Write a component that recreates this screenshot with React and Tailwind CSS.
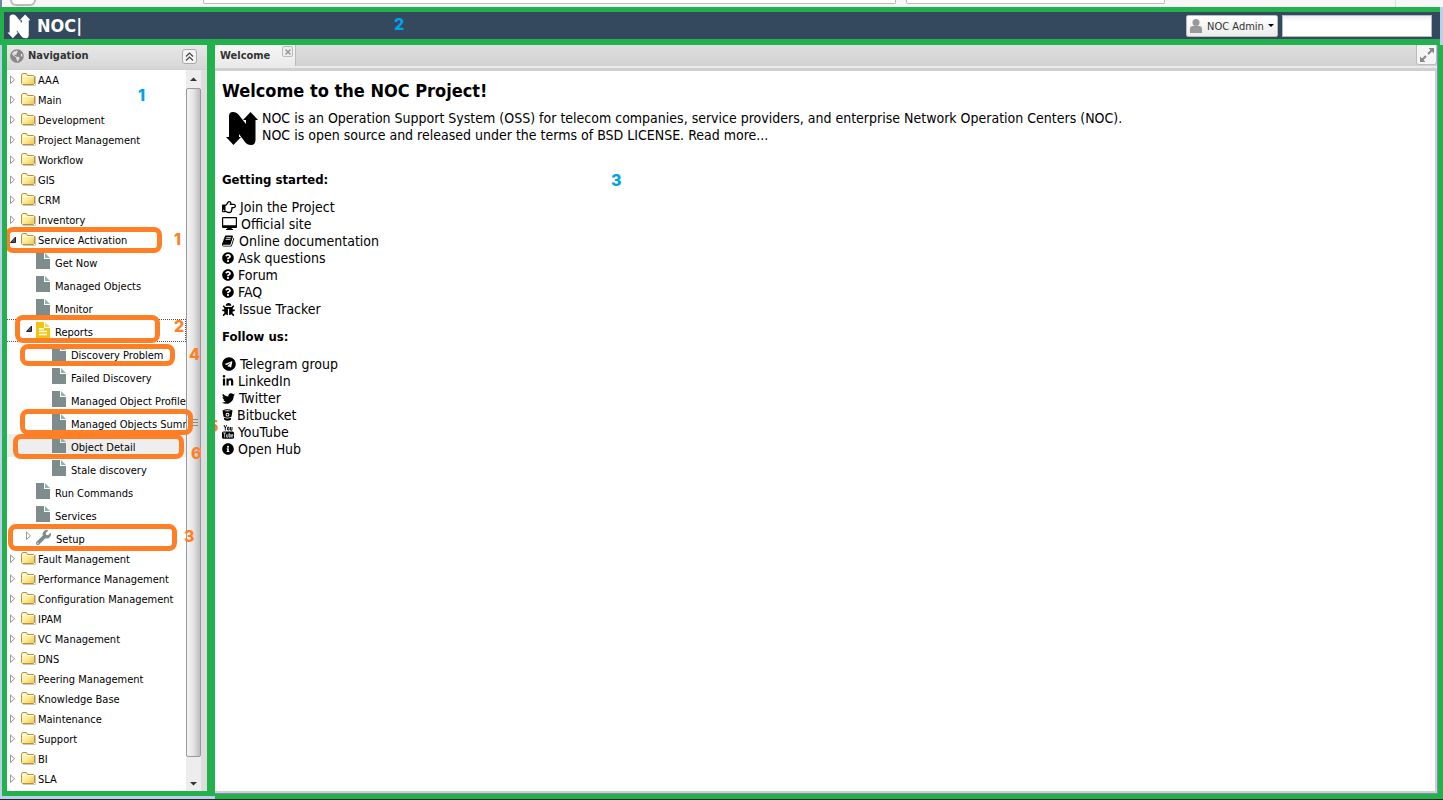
import React from "react";
import {
  FaRegHandPointRight,
  FaQuestionCircle,
  FaBug,
  FaTelegram,
  FaLinkedinIn,
  FaTwitter,
  FaInfoCircle,
  FaWrench,
  FaGlobeAmericas,
} from "react-icons/fa";

function Logo({ className }) {
  return (
    <svg viewBox="0 0 32 36" className={className} fill="currentColor" aria-hidden="true">
      <path d="M3 6Q3 2 7 2Q10 2 12 4L20 14V10H17L24.500 2L32 10H29.500V30Q29.500 35 25 35Q21 35 19 32L13 24V27H15L7.500 35L0 27H3Z" />
    </svg>
  );
}

function Folder() {
  return (
    <svg viewBox="0 0 16 16" className="size-4 shrink-0" aria-hidden="true">
      <defs>
        <linearGradient id="folder" x1="0" y1="0" x2="1" y2="1">
          <stop offset="0" stopColor="#fffbd6" />
          <stop offset="0.500" stopColor="#fdec98" />
          <stop offset="1" stopColor="#f3c24a" />
        </linearGradient>
      </defs>
      <path d="M3 13.500H15.500V4" fill="none" stroke="#c9c9c9" />
      <path d="M1.500 11.500V3L2.500 1.500H6.500L7.500 3.500H13.500L14.500 4.500V11.500L13.500 12.500H2.500Z" fill="url(#folder)" stroke="#b8913b" />
      <path d="M2.500 4.500H13.500" stroke="#fffbe0" />
    </svg>
  );
}

function FileIcon({ report }) {
  return (
    <svg viewBox="0 0 14 16" className="mb-px h-4 w-[14px] shrink-0" aria-hidden="true">
      <path d="M0 0H8V6H14V16H0Z" fill={report ? "#f1c40f" : "#7f8c8d"} />
      <path d="M9 0L14 5H9Z" fill={report ? "#f6d95c" : "#8fb3ad"} />
      {report && <path d="M3 7H8M3 9.500H11M3 12.500H11" stroke="#fff" strokeWidth="1.500" />}
    </svg>
  );
}

function Arrow({ open }) {
  return (
    <svg viewBox="0 0 8 10" className="h-[10px] w-2 shrink-0" aria-hidden="true">
      {open ? (
        <path d="M1.500 7.500H6.500V2Z" fill="#555" stroke="#222" />
      ) : (
        <path d="M1.500 1V8.500L5.500 4.750Z" fill="#fff" stroke="#999" />
      )}
    </svg>
  );
}

function Desktop({ className }) {
  return (
    <svg viewBox="0 0 15 14" className={className} fill="currentColor" aria-hidden="true">
      <path fillRule="evenodd" d="M1 0H14Q15 0 15 1V10Q15 11 14 11H9.500L10 12H11V13H4V12H5L5.500 11H1Q0 11 0 10V1Q0 0 1 0ZM1.200 1.200V8.200H13.800V1.200Z" />
    </svg>
  );
}

function Book({ className }) {
  return (
    <svg viewBox="0 0 1792 1792" className={className} fill="currentColor" aria-hidden="true">
      <path d="M1639 478q40 57 18 129l-275 906q-19 64-76.5 107.5t-122.5 43.5h-923q-77 0-148.5-53.5t-99.5-131.5q-24-67-2-127 0-4 3-27t4-37q1-8-3-21.5t-3-19.5q2-11 8-21t16.5-23.5 16.5-23.5q23-38 45-91.5t30-91.5q3-10 .5-30t-.5-28q3-11 17-28t17-23q21-36 42-92t25-90q1-9-2.5-32t.5-28q4-13 22-30.5t22-22.5q19-26 42.5-84.5t27.5-96.5q1-8-3-25.5t-2-26.5q2-8 9-18t18-23 17-21q8-12 16.5-30.5t15-35 16-36 19.5-32 26.5-23.5 36-11.5 47.5 5.5l-1 3q38-9 51-9h761q74 0 114 56t18 130l-274 906q-36 119-71.5 153.5t-128.5 34.5h-869q-27 0-38 15-11 16-1 43 24 70 144 70h923q29 0 56-15.5t35-41.5l300-987q7-22 5-57 38 15 59 43zm-1064 2q-4 13 2 22.5t20 9.5h608q13 0 25.5-9.5t16.5-22.5l21-64q4-13-2-22.5t-20-9.5h-608q-13 0-25.5 9.5t-16.5 22.5zm-83 256q-4 13 2 22.5t20 9.5h608q13 0 25.5-9.5t16.5-22.5l21-64q4-13-2-22.5t-20-9.5h-608q-13 0-25.5 9.5t-16.5 22.5z" />
    </svg>
  );
}

function Bucket({ className }) {
  return (
    <svg viewBox="0 0 12 13" className={className} fill="currentColor" aria-hidden="true">
      <path fillRule="evenodd" d="M0.500 1.500Q6 -0.800 11.500 1.500L10.300 8.500Q6 10.500 1.700 8.500ZM2.200 1.900Q6 3.100 9.800 1.900Q6 0.900 2.200 1.900ZM6 4A2.100 2.100 0 1 0 6 8.200A2.100 2.100 0 1 0 6 4Z" />
      <circle cx="6" cy="6.100" r="1" />
      <path d="M2 9.600Q6 11.300 10 9.600L9.600 11.700Q6 13.900 2.400 11.700Z" />
    </svg>
  );
}

function YouTube({ className }) {
  return (
    <svg viewBox="0 0 12 14" className={className} fill="currentColor" aria-hidden="true">
      <path d="M2 0L3.300 3V5.500M4.600 0L3.300 3M5.600 2.200H7V5H5.600ZM8.500 2V5.200H10V2" fill="none" stroke="currentColor" strokeWidth="0.900" />
      <rect x="0" y="6.500" width="12" height="7.300" rx="1.500" />
      <path d="M1.200 8H4M2.600 8V12.500M4.600 9.300V12.200H6V9.300M7.200 7.800V12.200H8.300V9.500H7.200M10.800 12.200H9.600V9.500H10.800V11H9.600" fill="none" stroke="#fff" strokeWidth="0.700" />
    </svg>
  );
}

const before = ["AAA", "Main", "Development", "Project Management", "Workflow", "GIS", "CRM", "Inventory"];
const after = [
  "Fault Management", "Performance Management", "Configuration Management", "IPAM", "VC Management", "DNS",
  "Peering Management", "Knowledge Base", "Maintenance", "Support", "BI", "SLA",
];
const reports = [
  "Discovery Problem", "Failed Discovery", "Managed Object Profile", "Managed Objects Summary", "Object Detail", "Stale discovery",
];

function FolderRow({ label, open }) {
  return (
    <button type="button" aria-expanded={!!open} className="flex h-5 w-full items-center pl-[2px] whitespace-nowrap">
      <Arrow open={open} />
      <span className="ml-[3px] flex"><Folder /></span>
      <span className="ml-[2px] pt-[2px]">{label}</span>
    </button>
  );
}

function Leaf({ label, deep, active }) {
  return (
    <a href="#" className={`flex h-[23px] items-center gap-[5px] whitespace-nowrap ${deep ? "pl-[45px]" : "pl-[29px]"} ${active ? "bg-[#eeeeee]" : ""}`}>
      <FileIcon />
      <span className="pt-[5px]">{label}</span>
    </a>
  );
}

const marks = [
  "left-[-2px] top-[157px] h-[26px] w-[157px]",
  "left-[8px] top-[245px] h-[28px] w-[145px]",
  "left-[13px] top-[274px] h-[22px] w-[155px]",
  "left-[13px] top-[339px] h-[26px] w-[173px]",
  "left-[6px] top-[364px] h-[25px] w-[171px]",
  "left-[1px] top-[454px] h-[27px] w-[169px]",
];
const numbers = [
  ["1", "left-[167px] top-[159px]"],
  ["2", "left-[167px] top-[246px]"],
  ["4", "left-[182px] top-[274px]"],
  ["6", "left-[184px] top-[373px]"],
  ["3", "left-[177px] top-[456px]"],
];
const num = "absolute font-[Inter,sans-serif] text-[16px] leading-5 font-extrabold";

function Sidebar() {
  return (
    <nav aria-label="Navigation" className="flex w-[213px] shrink-0 flex-col border-r-8 border-b-[5px] border-l-[5px] border-[#22b14c] bg-[#dddddd] text-[11px]">
      <div className="flex h-[25px] shrink-0 items-center gap-1 border-b border-[#d0d0d0] bg-linear-to-b from-[#e8e8e8] to-[#d6d6d6] pr-[10px] pb-[2px] pl-[3px]">
        <FaGlobeAmericas className="size-[14px] text-[#888]" />
        <h2 className="grow pt-px font-bold text-[#333]">Navigation</h2>
        <button type="button" aria-label="Collapse navigation" className="flex size-[15px] items-center justify-center rounded-[3px] border border-[#aaa] bg-[#f4f4f4]">
          <svg viewBox="0 0 9 9" className="size-[9px]" fill="none" stroke="#444" strokeWidth="1.200" aria-hidden="true">
            <path d="M1 4.500L4.500 1L8 4.500M1 8.500L4.500 5L8 8.500" />
          </svg>
        </button>
      </div>
      <div className="relative flex grow overflow-hidden pr-[6px]">
        <div className="min-w-0 grow overflow-hidden bg-white">
          {before.map((l) => <FolderRow key={l} label={l} />)}
          <FolderRow label="Service Activation" open />
          <Leaf label="Get Now" />
          <Leaf label="Managed Objects" />
          <Leaf label="Monitor" />
          <button type="button" aria-expanded="true" className="flex h-[23px] w-full items-center border-y border-r border-dotted border-[#555] pl-[18px]">
            <span className="mb-1 flex"><Arrow open /></span>
            <span className="ml-[3px] flex"><FileIcon report /></span>
            <span className="ml-[5px] pt-[5px]">Reports</span>
          </button>
          {reports.map((l) => <Leaf key={l} label={l} deep active={l === "Object Detail"} />)}
          <Leaf label="Run Commands" />
          <Leaf label="Services" />
          <button type="button" aria-expanded="false" className="flex h-[23px] w-full items-center pl-[18px]">
            <span className="mb-1 flex"><Arrow /></span>
            <FaWrench className="mb-px ml-[3px] size-[15px] text-[#7f8c8d]" />
            <span className="ml-[5px] pt-[5px]">Setup</span>
          </button>
          {after.map((l) => <FolderRow key={l} label={l} />)}
        </div>
        <div aria-hidden="true" className="flex w-[15px] shrink-0 flex-col items-center bg-[#ededed]">
          <svg viewBox="0 0 15 18" className="h-[18px] w-[15px]"><path d="M4 11L7.500 7.500L11 11Z" fill="#333" /></svg>
          <div className="flex w-[15px] grow flex-col items-center justify-center gap-[2px] rounded-[2px] border border-[#999] bg-linear-to-r from-[#f4f4f4] via-[#e4e4e4] to-[#bdbdbd]">
            <span className="h-px w-2 bg-[#888]" />
            <span className="h-px w-2 bg-[#888]" />
            <span className="h-px w-2 bg-[#888]" />
          </div>
          <svg viewBox="0 0 15 34" className="h-[34px] w-[15px]"><path d="M4 25L7.500 28.500L11 25Z" fill="#333" /></svg>
        </div>
        {marks.map((m) => <div key={m} className={`absolute rounded-[8px] border-[5px] border-[#ff7f27] ${m}`} />)}
        {numbers.map(([n, p]) => <span key={n} className={`${num} text-[#ff7f27] ${p}`}>{n}</span>)}
        <span className={`${num} top-[15px] left-[131px] text-[#00a2e8]`}>1</span>
      </div>
    </nav>
  );
}

const started = [
  ["Join the Project", FaRegHandPointRight, "w-[14px] h-[14px]"],
  ["Official site", Desktop, "w-[15px] h-[14px]"],
  ["Online documentation", Book, "w-[13px] h-[14px]"],
  ["Ask questions", FaQuestionCircle, "size-3"],
  ["Forum", FaQuestionCircle, "size-3"],
  ["FAQ", FaQuestionCircle, "size-3"],
  ["Issue Tracker", FaBug, "size-[13px]"],
];
const follow = [
  ["Telegram group", FaTelegram, "size-[14px]"],
  ["LinkedIn", FaLinkedinIn, "size-3"],
  ["Twitter", FaTwitter, "size-[13px]"],
  ["Bitbucket", Bucket, "w-[11px] h-[12px]"],
  ["YouTube", YouTube, "w-3 h-[14px]"],
  ["Open Hub", FaInfoCircle, "size-3"],
];

function Links({ items }) {
  return (
    <ul className="leading-[17px]">
      {items.map(([label, Icon, size]) => (
        <li key={label} className="flex">
          <a href="#" className="flex h-[17px] items-center gap-1"><Icon className={`mb-px shrink-0 ${size}`} />{label}</a>
        </li>
      ))}
    </ul>
  );
}

function Main() {
  return (
    <main className="relative flex min-w-0 grow flex-col overflow-hidden border-r-[5px] border-b-[5px] border-[#22b14c] bg-white">
      <div className="flex min-h-0 grow flex-col border-r border-b border-[#7f8fae]">
        <div className="flex h-[23px] shrink-0 justify-between border-b-2 border-[#eaeaea] bg-linear-to-b from-[#dedede] to-[#d2d2d2]">
          <div className="flex border-r border-[#bbb] bg-linear-to-b from-[#f6f6f6] to-[#eaeaea] pr-[2px] pl-[5px]">
            <button type="button" className="pt-[2px] pr-3 text-[11px] font-bold text-[#333]">Welcome</button>
            <button type="button" aria-label="Close tab" className="mt-px flex size-[11px] items-center justify-center rounded-[2px] border border-[#bbb] bg-[#eee] text-[#999]">
              <svg viewBox="0 0 6 6" className="size-[6px]" stroke="currentColor" strokeWidth="1.500" aria-hidden="true"><path d="M0.500 0.500L5.500 5.500M5.500 0.500L0.500 5.500" /></svg>
            </button>
          </div>
          <button type="button" aria-label="Full screen" className="flex h-5 w-[21px] items-center justify-center rounded-b-[3px] border border-t-0 border-[#bbb] bg-[#f5f5f5] text-[#888]">
            <svg viewBox="0 0 14 14" className="size-[14px]" fill="currentColor" aria-hidden="true">
              <path d="M8.500 0H14V5.500L12 3.500L8.800 6.700L7.300 5.200L10.500 2ZM5.500 14H0V8.500L2 10.500L5.200 7.300L6.700 8.800L3.500 12Z" />
            </svg>
          </button>
        </div>
        <div className="grow border-t-[3px] border-r-2 border-b-2 border-[#cfcfcf] bg-white px-[7px] pt-2 text-[14px] leading-[17px]">
          <h1 className="text-[18px] leading-6 font-bold">Welcome to the NOC Project!</h1>
          <div className="mt-[7px] flex">
            <Logo className="ml-1 h-9 w-8 shrink-0" />
            <p className="ml-1">
              NOC is an Operation Support System (OSS) for telecom companies, service providers, and enterprise Network Operation Centers (NOC).
              <br />
              NOC is open source and released under the terms of BSD LICENSE. <a href="#">Read more...</a>
            </p>
          </div>
          <h2 className="mt-[25px] mb-[11px] text-[13px] font-bold">Getting started:</h2>
          <Links items={started} />
          <h2 className="mt-[10px] mb-[11px] text-[13px] font-bold">Follow us:</h2>
          <Links items={follow} />
        </div>
      </div>
      <span className={`${num} top-[371px] left-[-7px] text-[#ff7f27]`}>5</span>
      <span className={`${num} top-[125px] left-[396px] text-[#00a2e8]`}>3</span>
    </main>
  );
}

export default function App() {
  return (
    <div className="flex min-h-screen flex-col bg-[#b9d0ea] font-['DejaVu_Sans_Condensed','DejaVu_Sans',sans-serif] text-black">
      <div className="flex h-[7px] shrink-0 overflow-hidden border-l-2 border-[#6b86a8] bg-[#f7f7f7]">
        <div className="ml-2 h-[6px] w-[26px] rounded-b-full border-2 border-t-0 border-[#bbb] bg-white" />
        <div className="ml-[167px] h-1 w-[693px] rounded-b-[2px] border border-t-0 border-[#bbb] bg-white" />
        <div className="ml-[10px] h-1 w-[259px] rounded-b-[2px] border border-t-0 border-[#bbb] bg-white" />
        <div className="ml-auto mr-[3px] w-[45px] border-l border-[#ddd]" />
      </div>
      <header className="relative mr-[3px] flex h-[38px] shrink-0 items-center border-t-[5px] border-b-[6px] border-l-4 border-[#22b14c] bg-[#34495e] pr-2 pl-[3px]">
        <Logo className="h-[26px] w-[24px] text-white" />
        <span className="ml-[6px] text-[18px] font-bold text-white">NOC|</span>
        <span className={`${num} top-[2px] left-[390px] text-[#00a2e8]`}>2</span>
        <button type="button" className="ml-auto flex h-[22px] w-[92px] items-center justify-center gap-[5px] rounded-[2px] border border-[#bbb] bg-linear-to-b from-white to-[#ececec] text-[11px] whitespace-nowrap text-[#333]">
          <svg viewBox="0 0 12 14" className="h-[14px] w-3" fill="#999" aria-hidden="true"><circle cx="6" cy="3.500" r="3.500" /><path d="M0 14V10Q0 7 3 7H9Q12 7 12 10V14Z" /></svg>
          <span className="pt-[4px]">NOC Admin</span>
          <svg viewBox="0 0 6 3" className="-ml-px h-[3px] w-[6px]" aria-hidden="true"><path d="M0 0H6L3 3Z" /></svg>
        </button>
        <input type="text" aria-label="Search" className="ml-1 h-[22px] w-[150px] border border-[#b5b8c8] bg-linear-to-b from-[#eeeeee] to-white to-30% px-1 text-[11px]" />
      </header>
      <div className="flex grow border-b border-[#222] pl-[2px]">
        <div className="mb-[3px] flex"><Sidebar /></div>
        <Main />
      </div>
    </div>
  );
}
